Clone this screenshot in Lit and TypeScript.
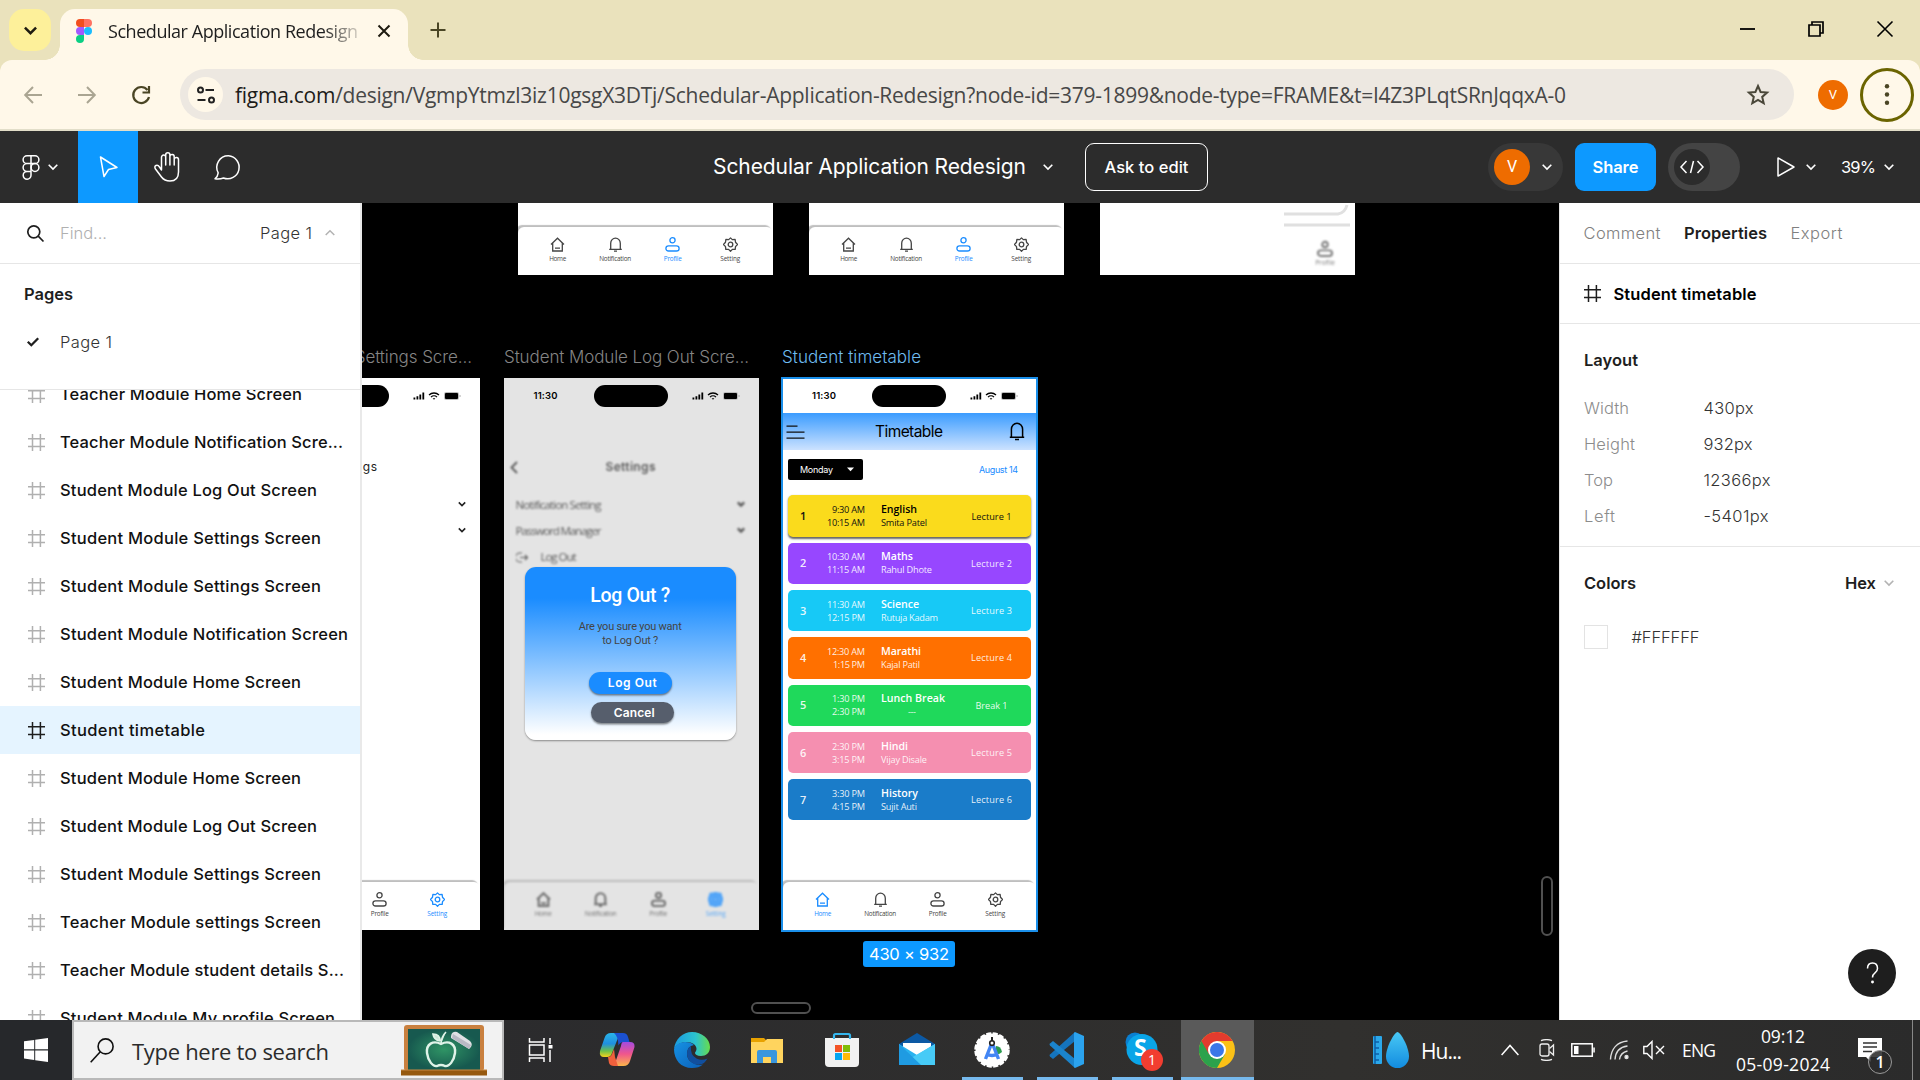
import { LitElement, html, css, svg } from "lit";
import { customElement, property } from "lit/decorators.js";
import { classMap } from "lit/directives/class-map.js";

/** A run of text tracked so that it occupies exactly `w` pixels. */
@customElement("fit-text")
class FitText extends LitElement {
  @property({ type: Number }) w = 0;
  static styles = css`
    :host { display: inline-block; white-space: pre; flex: none; width: max-content; }
  `;
  firstUpdated() {
    const n = (this.textContent ?? "").length;
    const natural = this.getBoundingClientRect().width;
    if (this.w && n > 1) {
      this.style.letterSpacing = `${(this.w - natural) / (n - 1)}px`;
      this.style.width = `${this.w}px`;
    }
  }
  render() { return html`<slot></slot>`; }
}

const chevron = (w = 10, c = "currentColor", s = 1.6) => html`<svg width=${w} height=${w} viewBox="0 0 10 10" fill="none" stroke=${c} stroke-width=${s}><path d="M.7 2.8 5 7.1 9.3 2.8"/></svg>`;
const hash = (c: string) => html`<svg width="17" height="17" viewBox="0 0 17 17" fill="none" stroke=${c} stroke-width="1.5"><path d="M4.5 0v17M12.4 0v17M0 4.7h17M0 12.6h17"/></svg>`;

const homeIcon = svg`<path d="M1 7.5 7.5 1.2 14 7.5M2.7 6.3V14h9.6V6.3M5 11.2h5"/>`;
const bellIcon = svg`<path d="M2.7 12.2V6.2a4.8 5 0 0 1 9.6 0v6M1.2 12.3h12.6M6 14.2h3"/>`;
const userIcon = svg`<circle cx="7.5" cy="3.3" r="2.6"/><rect x=".9" y="8.8" width="13.2" height="5.2" rx="2.6"/>`;
const gearIcon = svg`<path d="M7.5 .9 9.3 2.6 12.1 2.4 12.5 5.2 14.5 7.5 12.5 9.6 12.2 12.4 9.4 12.4 7.5 14.2 5.6 12.4 2.8 12.4 2.5 9.6 .5 7.5 2.5 5.2 2.9 2.4 5.7 2.6Z" stroke-linejoin="round"/><circle cx="7.5" cy="7.5" r="2.3"/>`;

@customElement("phone-status")
class PhoneStatus extends LitElement {
  static styles = css`
    :host { display: flex; align-items: center; height: 35px; flex: none; color: #000; }
    .time { font: 600 9.5px/12px Inter, sans-serif; margin-left: 30px; }
    .island { width: 74px; height: 22px; border-radius: 11px; background: #000; margin-left: 36px; }
    .signs { margin-left: 24px; }
    svg { display: block; }
  `;
  render() {
    return html`<fit-text class="time" w="24">11:30</fit-text>
      <div class="island"></div>
      <svg class="signs" width="50" height="10" viewBox="0 0 50 10">
        <path d="M.5 6.4h1.8V8.6H.5zM3.5 5.2h1.8v3.4H3.5zM6.4 3.6h1.8v5H6.4zM9.4 1.6h1.8v7H9.4z"/>
        <g fill="none" stroke="#000" stroke-width="1.3"><path d="M16 4a7.2 7.2 0 0 1 10 0M18 6.1a4.3 4.3 0 0 1 6 0"/></g>
        <path d="M19.6 7.3h2.8L21 8.8z"/>
        <rect x="31" y="1" width="15" height="8" rx="2.2" fill="#bbb"/><rect x="32" y="2" width="13" height="6" rx="1"/><path d="M46.6 3.8v2.4q1-.5 1-1.2t-1-1.2" fill="#999"/>
      </svg>`;
  }
}

@customElement("phone-nav")
class PhoneNav extends LitElement {
  @property({ type: Number }) active = 0;
  @property({ type: Number }) stroke = 1.3;
  static styles = css`
    :host { display: block; height: 48px; flex: none; margin-top: auto; background: #fff; border-radius: 6px 6px 0 0; box-shadow: -2px -2px 1px #00000040; }
    .items { display: grid; grid-template-columns: repeat(4, 57.5px); margin-left: 11px; padding-top: 10px; }
    .item { display: flex; flex-direction: column; align-items: center; color: #444; font: 6.4px/8px "Open Sans", sans-serif; gap: 3px; }
    .on { color: #1a8cff; }
    svg { display: block; }
  `;
  render() {
    const items = [["Home", homeIcon], ["Notification", bellIcon], ["Profile", userIcon], ["Setting", gearIcon]] as const;
    const widths = [17, 32, 18, 20];
    return html`<div class="items">${items.map(([t, i], k) => html`
      <div class=${classMap({ item: true, on: this.active === k })}>
        <svg width="15" height="15" viewBox="0 0 15 15" fill="none" stroke="currentColor" stroke-width=${this.stroke > 2 && this.active === k ? 3.6 : this.stroke}>${i}</svg>
        <fit-text w=${widths[k]}>${t}</fit-text>
      </div>`)}</div>`;
  }
}

const LESSONS = [
  { c: "#fadb1c", a: "9:30 AM", b: "10:15 AM", aw: 33, bw: 38, n: "English", nw: 36, t: "Smita Patel", tw: 46, l: "Lecture 1", lw: 40 },
  { c: "#9747ff", a: "10:30 AM", b: "11:15 AM", aw: 38, bw: 38, n: "Maths", nw: 32, t: "Rahul Dhote", tw: 51, l: "Lecture 2", lw: 41 },
  { c: "#17c9f6", a: "11:30 AM", b: "12:15 PM", aw: 38, bw: 38, n: "Science", nw: 38, t: "Rutuja Kadam", tw: 57, l: "Lecture 3", lw: 41 },
  { c: "#ff7000", a: "12:30 AM", b: "1:15 PM", aw: 38, bw: 32, n: "Marathi", nw: 40, t: "Kajal Patil", tw: 39, l: "Lecture 4", lw: 41 },
  { c: "#1fd95b", a: "1:30 PM", b: "2:30 PM", aw: 33, bw: 33, n: "Lunch Break", nw: 64, t: "---", tw: 8, l: "Break 1", lw: 32 },
  { c: "#f58fb0", a: "2:30 PM", b: "3:15 PM", aw: 33, bw: 33, n: "Hindi", nw: 27, t: "Vijay Disale", tw: 46, l: "Lecture 5", lw: 41 },
  { c: "#1a7cc9", a: "3:30 PM", b: "4:15 PM", aw: 33, bw: 33, n: "History", nw: 37, t: "Sujit Auti", tw: 36, l: "Lecture 6", lw: 41 },
];

@customElement("timetable-screen")
class TimetableScreen extends LitElement {
  static styles = css`
    :host { display: flex; flex-direction: column; width: 253px; height: 551px; background: #fff; color: #000; font-family: "Open Sans", sans-serif; overflow: hidden; }
    svg { display: block; }
    phone-status { height: 34px; margin-left: -1px; }
    .head { height: 37px; display: flex; align-items: center; background: linear-gradient(#3b9cff, #cce2ff); flex: none; padding: 0 11px 0 3px; }
    .title { font: 400 15.5px/20px Inter, sans-serif; margin: 0 auto 0 70px; }
    .bar { display: flex; justify-content: space-between; align-items: center; padding: 9px 18px 0 5px; flex: none; }
    .day { width: 75px; height: 21px; box-sizing: border-box; background: #000; color: #fff; border-radius: 2px; display: flex; align-items: center; justify-content: space-between; padding: 0 9px 0 12px; font: 9px/12px Inter, sans-serif; }
    .date { font: 9px/12px Inter, sans-serif; color: #1a8cff; }
    .list { display: flex; flex-direction: column; gap: 6px; padding: 15.4px 5px 0; flex: none; }
    .card { height: 41.3px; border-radius: 5px; display: flex; align-items: center; color: #ffffffe6; font-size: 9.2px; line-height: 13px; }
    .card:first-child { color: #111; box-shadow: 0 1.5px 2px #0009; }
    .num { width: 6px; margin-left: 12px; font: 600 11px/12px "Open Sans"; text-align: center; }
    .times { width: 59px; display: flex; flex-direction: column; align-items: flex-end; }
    .who { width: 90px; margin-left: 16px; display: flex; flex-direction: column; align-items: flex-start; }
    .name { font-weight: 600; font-size: 10.6px; color: #fff; }
    .card:first-child .name { color: #000; }
    .pause { margin-left: 27px; }
    .lec { width: 41px; display: flex; justify-content: center; }
  `;
  render() {
    return html`<phone-status></phone-status>
      <div class="head">
        <svg width="19" height="16" viewBox="0 0 19 16" stroke="#111" stroke-width="1.2"><path d="M.5 2.2h11M.5 8.2h18M.5 14.2h18"/></svg>
        <fit-text class="title" w="68">Timetable</fit-text>
        <svg width="16" height="19" viewBox="0 0 16 19" fill="none" stroke="#000" stroke-width="1.5"><path d="M2.4 15.2V7.3a5.6 6 0 0 1 11.2 0v7.9M.8 15.2h14.4M6 17.6h4"/></svg>
      </div>
      <div class="bar">
        <div class="day"><fit-text w="33">Monday</fit-text><svg width="7" height="5" viewBox="0 0 7 5"><path d="M0 .5h7L3.5 4.3z" fill="#fff"/></svg></div>
        <fit-text class="date" w="39">August 14</fit-text>
      </div>
      <div class="list">${LESSONS.map((x, i) => html`
        <div class="card" style="background:${x.c}">
          <div class="num">${i + 1}</div>
          <div class="times"><fit-text w=${x.aw}>${x.a}</fit-text><fit-text w=${x.bw}>${x.b}</fit-text></div>
          <div class="who"><fit-text class="name" w=${x.nw}>${x.n}</fit-text><fit-text class=${x.t === "---" ? "pause" : ""} w=${x.tw}>${x.t}</fit-text></div>
          <div class="lec"><fit-text w=${x.lw}>${x.l}</fit-text></div>
        </div>`)}</div>
      <phone-nav active="0"></phone-nav>`;
  }
}

@customElement("settings-screen")
class SettingsScreen extends LitElement {
  @property({ type: Boolean, reflect: true }) dialog = false;
  static styles = css`
    :host { display: flex; flex-direction: column; width: 255px; height: 552px; background: #fff; overflow: hidden; color: #222; font: 11.5px/14px "Open Sans", sans-serif; position: relative; }
    :host([dialog]) { background: #e4e4e4; }
    svg { display: block; }
    .body { flex: 1; display: flex; flex-direction: column; }
    :host([dialog]) .body { filter: blur(0.9px) opacity(.72); }
    .title { display: flex; align-items: center; padding: 46px 0 0 6px; gap: 88px; font: 400 12px/16px Inter, sans-serif; }
    :host([dialog]) .title { font-weight: 600; }
    .rows { display: flex; flex-direction: column; gap: 12px; padding: 23px 14px 0 12px; }
    .row { display: flex; justify-content: space-between; align-items: center; }
    .row svg { margin-bottom: 2px; }
    .out { display: flex; gap: 13px; align-items: center; }
    phone-nav { margin-top: auto; }
    :host([dialog]) phone-nav { background: #e4e4e4; }
    .box { position: absolute; left: 21.5px; top: 189px; width: 210.5px; height: 173px; border-radius: 11px; background: linear-gradient(#1a8cff 18%, #fff 97%); box-shadow: 0 1px 2px #0006; display: flex; flex-direction: column; align-items: center; }
    .q { font: 500 19.5px/24px Roboto, sans-serif; color: #fff; margin-top: 17px; }
    .msg { font: 400 11px/13.5px Roboto, sans-serif; color: #444; margin-top: 12px; display: flex; flex-direction: column; align-items: center; }
    .btn { width: 83px; height: 21.5px; border-radius: 11px; background: #1a8cff; color: #fff; font: 600 12px/22px Inter, sans-serif; display: flex; justify-content: center; box-shadow: 0 1.5px 2px #0007; }
    .ok { margin: 25px 0 0 1px; } .ok fit-text { margin-left: 3px; }
    .no { margin: 8px 0 0 5px; background: #565e6c; } .no fit-text { margin-left: 3px; }
  `;
  render() {
    const arrow = html`<svg width="8" height="8" viewBox="0 0 10 10" fill="none" stroke="#222" stroke-width=${this.dialog ? 3 : 2}><path d="M1 3l4 4 4-4"/></svg>`;
    return html`<phone-status></phone-status>
      <div class="body">
        <div class="title"><svg width="8" height="13" viewBox="0 0 8 13" fill="none" stroke="#222" stroke-width="1.8"><path d="M7 1 1.5 6.5 7 12"/></svg><fit-text w="50">Settings</fit-text></div>
        <div class="rows">
          <div class="row"><fit-text w="86">Notification Setting</fit-text>${arrow}</div>
          <div class="row"><fit-text w="86">Password Manager</fit-text>${arrow}</div>
          ${this.dialog ? html`<div class="out"><svg width="12" height="11" viewBox="0 0 12 11" fill="none" stroke="#222" stroke-width="1.2"><path d="M6 1H4a4.5 4.5 0 0 0 0 9h2M4 5.5h7M9 3l2.5 2.5L9 8"/></svg><fit-text w="36">Log Out</fit-text></div>` : ""}
        </div>
        <phone-nav active="3" stroke=${this.dialog ? 2.1 : 1.3}></phone-nav>
      </div>
      ${this.dialog ? html`<div class="box">
        <fit-text class="q" w="80">Log Out ?</fit-text>
        <div class="msg"><fit-text w="103">Are you sure you want</fit-text><fit-text w="56">to Log Out ?</fit-text></div>
        <div class="btn ok"><fit-text w="49">Log Out</fit-text></div>
        <div class="btn no"><fit-text w="41">Cancel</fit-text></div>
      </div>` : ""}`;
  }
}

const LAYERS: [string, number][] = [
  ["Teacher Module Home Screen", 242], ["Teacher Module Notification Scre...", 283], ["Student Module Log Out Screen", 257],
  ["Student Module Settings Screen", 261], ["Student Module Settings Screen", 261], ["Student Module Notification Screen", 288],
  ["Student Module Home Screen", 241], ["Student timetable", 145], ["Student Module Home Screen", 241],
  ["Student Module Log Out Screen", 257], ["Student Module Settings Screen", 261], ["Teacher Module settings Screen", 261],
  ["Teacher Module student details S...", 284], ["Student Module My profile Screen", 275],
];

const taskIcons = {
  view: svg`<g fill="none" stroke="#fff" stroke-width="1.5"><path d="M5.5 6v4h14.500V6M5.5 30v-4h14.500v4"/><rect x="5.500" y="13" width="14.500" height="10"/><path d="M26 6v6M26 18v12"/></g><path d="M24.500 13h4v3.500h-4z" fill="#fff"/>`,
  copilot: svg`<defs><linearGradient id="ca" x2="0" y2="1"><stop stop-color="#2ab5e8"/><stop offset=".45" stop-color="#1f8fe0"/><stop offset=".75" stop-color="#6cc04a"/><stop offset="1" stop-color="#f5d21c"/></linearGradient><linearGradient id="cb" x2="0" y2="1"><stop stop-color="#a44be0"/><stop offset=".5" stop-color="#f0568c"/><stop offset="1" stop-color="#fbb54a"/></linearGradient></defs>
    <path d="M12 1h9L13 21q-1 4-5 4H5q-5 0-4-6L5.500 6Q7 1 12 1Z" fill="url(#ca)"/><path d="M15 1h9q4 0 5 4l1.500 5h-6q-3.500 0-5 3.500Q19 4 15 1Z" fill="#1b50d0"/>
    <path d="M24 10h7q5 0 4.500 5L31 29q-1.500 5-6.500 5H15L22 14q.5-4 2-4Z" fill="url(#cb)"/><path d="M9 25q3 0 4-3l2-5 1 8 3 9h-4q-4 0-5-3z" fill="#f0603c"/>`,
  edge: svg`<defs><linearGradient id="ea" x2="1"><stop stop-color="#1a9ae0"/><stop offset=".6" stop-color="#2cc3cf"/><stop offset="1" stop-color="#67dc4c"/></linearGradient><linearGradient id="eb" x2="1" y2="1"><stop stop-color="#1692e4"/><stop offset="1" stop-color="#0b5fb8"/></linearGradient></defs>
    <path d="M0 17C1 7 9 0 18 0c10 0 18 7 18 15 0 6-4 9-9 9-4 0-6-1.500-6-3 0-1 1.500-2 1.500-4 0-4-4-7-10-7Q4 10 0 17Z" fill="url(#ea)"/>
    <path d="M0 17Q3 10 11 10q6 0 9 3-7 1-7 9 0 7 8 10 4 1.500 8 .5-4 3.500-11 3.500C7 36 0 28 0 17Z" fill="url(#eb)"/><path d="M17 14q-4 2-4 8 0 6 7 10 6 2 10-1 2-2 3.500-4.500-6 2.500-11 0Q16 23 17 14Z" fill="#114f9e"/>`,
  folder: svg`<path d="M2 6h13l3 3h16v22H2z" fill="#e8a200"/><path d="M2 10h13l3-3h16v24H2z" fill="#ffd45e"/><path d="M8 31V20q0-2 2-2h16q2 0 2 2v11h-6v-6h-8v6z" fill="#3a96dd"/>`,
  store: svg`<path d="M10 8V3.500Q10 2 11.500 2h13Q26 2 26 3.500V8" fill="none" stroke="#35b6ee" stroke-width="2.200"/><path d="M1 6h34v25q0 4-4 4H5q-4 0-4-4z" fill="#f1f1f1"/><path d="M9 7V3h2v4zM25 7V3h2v4z" fill="#35b6ee"/><path d="M11 13h7v7h-7z" fill="#f35325"/><path d="M19 13h7v7h-7z" fill="#81bc06"/><path d="M11 21h7v7h-7z" fill="#05a6f0"/><path d="M19 21h7v7h-7z" fill="#ffba08"/>`,
  mail: svg`<path d="M0 12 18 1l18 11v10H0z" fill="#0c59a4"/><path d="M4 11h28v12H4z" fill="#fff"/><path d="M0 12 18 23 36 12v21H0z" fill="#29b2ef"/><path d="M0 33 36 12v21z" fill="#47cbf7"/><path d="M0 12 22 33H0z" fill="#1f9be2"/>`,
  studio: svg`<circle cx="18" cy="18" r="16.500" fill="#fff" stroke="#fff" stroke-width="2.500" stroke-dasharray="5 1.500"/><path d="M22 14q5 0 6 6-3 3-7 2z" fill="#2b9b4f"/><path d="M17 13 11.500 27M19 13l5.500 14M12.500 22q5.500 3 11 0" fill="none" stroke="#4285f4" stroke-width="3.400"/><circle cx="18" cy="11" r="2.300" fill="#fff" stroke="#222" stroke-width="1.600"/><path d="M18 5v4" stroke="#222" stroke-width="2"/>`,
  code: svg`<path d="M26 0v9L4 27 1 24.500q-1-1 0-2z" fill="#1574bd"/><path d="M26 36v-9L4 9 1 11.500q-1 1 0 2z" fill="#1b84cc"/><path d="M26 0l-1 1v34l1 1 9-4V4z" fill="#2ba3ee"/>`,
  skype: svg`<circle cx="11" cy="10" r="9.500" fill="#0a7fd0"/><circle cx="25" cy="26" r="9" fill="#0a7fd0"/><circle cx="18" cy="17.500" r="15.500" fill="#0aa5e8"/>`,
  chrome: svg`<circle cx="18" cy="18" r="18" fill="#fbc116"/><path d="M2.400 9A18 18 0 0 0 18 36l7.800-13.500L18 18z" fill="#2ba24c"/><path d="M2.400 9 10.200 22.500 18 9H33.600A18 18 0 0 0 2.400 9z" fill="#e33b2e"/><circle cx="18" cy="18" r="9" fill="#fff"/><circle cx="18" cy="18" r="7" fill="#3a77e8"/>`,
};

@customElement("task-bar")
class TaskBar extends LitElement {
  static styles = css`
    :host { display: flex; height: 60px; background: linear-gradient(90deg, #2b2b2d 25%, #31302e 70%, #2b2b2b); color: #fff; font-family: "Open Sans", sans-serif; align-items: stretch; }
    svg { display: block; flex: none; }
    .start { width: 72px; display: grid; place-items: center; background: #26282b; }
    .search { width: 432px; box-sizing: border-box; background: #f2f2f2; border: 2px solid #b9b9b9; display: flex; align-items: center; padding: 0 15px 0 16px; color: #2b2b2b; font-size: 22px; }
    .search fit-text { margin-left: 18px; padding-top: 2px; }
    .board { margin-left: auto; }
    .app { width: 75px; display: grid; place-items: center; position: relative; box-sizing: border-box; }
    .run::after { content: ""; position: absolute; left: 8px; right: 6px; bottom: 0; height: 3px; background: #76b9ed; }
    .cur { background: #5a5a5a; width: 73px; margin-left: 2px; padding-right: 2px; }
    .cur::after { left: 0; right: 0; }
    .s { position: absolute; font: 700 23px/28px "Open Sans"; top: 13px; left: 30px; }
    .badge { position: absolute; left: 37px; top: 29px; width: 22px; height: 22px; border-radius: 50%; background: #f23d30; font: 14px/22px "Open Sans"; text-align: center; }
    .tray { display: flex; align-items: center; margin-left: 117px; }
    .weather { font-size: 21px; margin-left: 11px; padding-top: 2px; }
    .up { margin-left: 39px; } .cam { margin-left: 19px; } .bat { margin-left: 15px; } .wifi { margin-left: 14px; } .vol { margin-left: 12px; }
    .lang { margin-left: 17px; font-size: 17.500px; }
    .clock { margin-left: 20px; width: 94px; display: flex; flex-direction: column; align-items: center; font-size: 17.500px; line-height: 28px; }
    .note { margin-left: 28px; position: relative; width: 36px; height: 40px; }
    .count { position: absolute; left: 10px; top: 20px; width: 22px; height: 22px; border: 1.500px solid #999; border-radius: 50%; background: #2b2b2be0; font: 600 16px/22px "Open Sans"; text-align: center; }
    .desk { width: 1px; background: #888; align-self: stretch; margin-left: 18px; }
  `;
  render() {
    const apps = Object.entries(taskIcons);
    return html`
      <div class="start"><svg width="24" height="24" viewBox="0 0 24 24" fill="#fff"><path d="M0 3.300 10.200 1.900v9.400H0zM11.200 1.700 24 0v11.300H11.200zM0 12.400h10.200v9.500L0 20.500zM11.200 12.400H24V24l-12.800-1.800z"/></svg></div>
      <div class="search">
        <svg width="24" height="25" viewBox="0 0 24 25" fill="none" stroke="#111" stroke-width="1.600"><circle cx="15.600" cy="8.400" r="7.500"/><path d="M10.300 13.700.7 24.200"/></svg>
        <fit-text w="197">Type here to search</fit-text>
        <svg class="board" width="86" height="51" viewBox="0 0 86 51"><defs><radialGradient id="bg"><stop stop-color="#2f9465"/><stop offset="1" stop-color="#17594f"/></radialGradient></defs>
          <rect x="3" y="0" width="80" height="46" rx="3" fill="#c9803f"/><rect x="7" y="4" width="72" height="41" fill="url(#bg)"/><rect x="0" y="45" width="86" height="5.500" fill="#96590f"/><path d="M0 45h86" stroke="#c98a45"/>
          <path d="M40 19c-8-4-15 0-14 9 1 8 6 14 10 13q4-2 8 0c4 1 9-5 10-13 1-9-6-13-14-9z" fill="none" stroke="#dff3e8" stroke-width="2.400"/><path d="M40 19Q40 12 45 7M39 16q-6-1-7-7 7 0 7 7" fill="#cfe8da" stroke="#dff3e8" stroke-width="1.700"/>
          <path d="M50 11q1-5 6-4l13 9q4 4-1 8L50 13z" fill="#e0e0e4"/><path d="M51 13l17 11 2-4-18-11z" fill="#b9b9c4"/></svg>
      </div>
      ${apps.map(([k, i]) => html`<div class=${classMap({ app: true, run: ["studio", "code", "skype", "chrome"].includes(k), cur: k === "chrome" })}>
        <svg width="36" height="36" viewBox="0 0 36 36">${i}</svg>
        ${k === "skype" ? html`<span class="s">S</span><span class="badge">1</span>` : ""}</div>`)}
      <div class="tray">
        <svg width="39" height="36" viewBox="0 0 39 36"><defs><linearGradient id="dr" x2="0" y2="1"><stop stop-color="#48c8f4"/><stop offset="1" stop-color="#128ce0"/></linearGradient></defs><rect x="2" y="4" width="9" height="28" rx="1" fill="#2ba8ea"/><path d="M4 4v28M4 10h4M4 16h4M4 22h4M4 28h4" stroke="#0d5fa8" stroke-width="1.500"/><path d="M26.500 0c3 0 11.500 15 11.500 24.500a11.500 11.500 0 0 1-23 0C15 15 23.500 0 26.500 0z" fill="url(#dr)"/></svg>
        <fit-text class="weather" w="41">Hu...</fit-text>
        <svg class="up" width="18" height="12" viewBox="0 0 18 12" fill="none" stroke="#fff" stroke-width="1.500"><path d="M.6 11 9 1.500l8.400 9.500"/></svg>
        <svg class="cam" width="18" height="22" viewBox="0 0 18 22" fill="none" stroke="#eee" stroke-width="1.300"><rect x="2" y="5" width="9" height="12" rx="2"/><path d="M11.500 9.500 15.500 6v10l-4-3.500M3 1.600Q8.500-.4 14 1.600M3 20.400q5.500 2 11 0"/></svg>
        <svg class="bat" width="24" height="14" viewBox="0 0 24 14"><rect x=".8" y=".8" width="20.500" height="12.400" fill="none" stroke="#fff" stroke-width="1.500"/><path d="M3 3h4.500v8H3zM22.300 4.500h1.500v5h-1.500z" fill="#fff"/></svg>
        <svg class="wifi" width="22" height="20" viewBox="0 0 22 20" fill="none" stroke="#ddd" stroke-width="1.400"><path d="M1.500 19.500C2 9 8 2 18.500 1M6 19.500C6.500 12 11 7 18.500 6M10.500 19.500q1-7 8-8.500"/><circle cx="17.500" cy="17" r="1.500" fill="#fff"/></svg>
        <svg class="vol" width="22" height="20" viewBox="0 0 22 20" fill="none" stroke="#fff" stroke-width="1.400"><path d="M.8 6.500H4L9 1.500v17L4 13.500H.8zM13 6l8 8M21 6l-8 8"/></svg>
        <fit-text class="lang" w="34">ENG</fit-text>
        <div class="clock"><fit-text w="44">09:12</fit-text><fit-text w="94">05-09-2024</fit-text></div>
        <div class="note"><svg width="36" height="40" viewBox="0 0 36 40"><path d="M0 8h24v19H13v5l-5-5H0z" fill="#fff"/><path d="M5 13h14M5 17h14M5 21.500h9" stroke="#333" stroke-width="1.300"/></svg><span class="count">1</span></div>
        <div class="desk"></div>
      </div>`;
  }
}

@customElement("app-root")
class AppRoot extends LitElement {
  static styles = css`
    :host { display: flex; flex-direction: column; width: 1920px; height: 1080px; overflow: hidden; background: #eae2bc; font-family: Inter, sans-serif; font-size: 16.5px; line-height: 24px; color: #1e1e1e; }
    * { box-sizing: border-box; }
    svg { display: block; flex: none; overflow: visible; }
    .tabs { height: 60px; display: flex; flex: none; padding: 9px 0 0 9px; font-family: "Open Sans", sans-serif; }
    .down { width: 42px; height: 42px; border-radius: 15px; background: #fdf09a; display: grid; place-items: center; }
    .tab { width: 348px; height: 51px; margin-left: 9px; background: #fff8e9; border-radius: 15px 15px 0 0; display: flex; align-items: center; position: relative; padding: 0 18px 8px 16px; font-size: 18px; }
    .tab::before, .tab::after { content: ""; position: absolute; bottom: 0; width: 15px; height: 15px; }
    .tab::before { left: -15px; background: radial-gradient(circle at 0 0, transparent 14.500px, #fff8e9 15px); }
    .tab::after { right: -15px; background: radial-gradient(circle at 100% 0, transparent 14.500px, #fff8e9 15px); }
    .cap { margin-left: 16px; width: 250px; overflow: hidden; mask-image: linear-gradient(90deg, #000 86%, #0003); }
    .cross { margin-left: auto; }
    .plus { margin: 13px 0 0 22px; }
    .win { margin: 12px 27px 0 auto; display: flex; gap: 53px; }
    .address { height: 71px; flex: none; background: #fff8e9; border-bottom: 2px solid #e2dec9; border-radius: 12px 12px 0 0; display: flex; align-items: center; padding: 0 6px 0 24px; font-family: "Open Sans", sans-serif; }
    .fwd, .reload { margin-left: 36px; }
    .url { width: 1614px; height: 51px; border-radius: 26px; background: #ede8e1; margin-left: 30px; display: flex; align-items: center; padding: 0 25px 0 8px; color: #474747; font-size: 21px; }
    .host { color: #1c1b18; }
    .site { width: 35px; height: 35px; border-radius: 50%; background: #fff8e9; display: grid; place-items: center; margin-right: 12px; }
    .url svg.star { margin-left: auto; }
    .ava { width: 30px; height: 30px; border-radius: 50%; background: #ee6c00; color: #fff; font: 13px/30px Roboto, sans-serif; text-align: center; margin-left: 24px; }
    .kebab { width: 54px; height: 54px; border-radius: 50%; border: 3px solid #6b6400; margin-left: 12px; display: grid; place-items: center; }
    .bar { height: 72px; flex: none; background: #2c2c2c; color: #fff; display: flex; align-items: center; }
    .menu { width: 78px; padding-left: 22px; display: flex; align-items: center; gap: 8px; }
    .tool { width: 60px; height: 72px; display: grid; place-items: center; }
    .tool + .tool { padding-right: 2px; }
    .on { background: #0d99ff; }
    .doc { margin-left: 455px; font-size: 21px; display: flex; align-items: center; gap: 17px; }
    .ask { width: 123px; height: 48px; border: 1.5px solid #fff; border-radius: 9px; margin-left: 32px; display: grid; place-items: center; font-weight: 500; }
    .pill { width: 75px; height: 48px; border-radius: 24px; background: #383838; display: flex; align-items: center; padding-left: 6px; gap: 12px; margin-left: 280px; }
    .face { width: 36px; height: 36px; border-radius: 50%; background: #ee6c00; font: 16px/36px Roboto, sans-serif; text-align: center; }
    .share { width: 81px; height: 48px; border-radius: 9px; background: #0d99ff; margin-left: 12px; display: grid; place-items: center; font-weight: 600; }
    .dev { width: 72px; height: 48px; border-radius: 24px; background: #444; margin-left: 12px; padding: 6px; }
    .knob { width: 36px; height: 36px; border-radius: 50%; background: #2c2c2c; display: grid; place-items: center; }
    .play { margin-left: 37px; } .play + svg { margin-left: 11px; }
    .zoom { margin: 0 8px 0 25px; }
    .main { flex: 1; display: flex; min-height: 0; }
    .left { width: 362px; background: #fff; border-right: 2px solid #e9e9e9; flex: none; display: flex; flex-direction: column; overflow: hidden; }
    .find { height: 61px; flex: none; border-bottom: 1px solid #e6e6e6; display: flex; align-items: center; padding: 0 25px 0 27px; color: #333; font-weight: 350; }
    .find .ph { color: #b0b0b0; margin-left: 16px; } .find .pg { margin-left: auto; margin-right: 13px; }
    .pages { height: 126px; flex: none; border-bottom: 1px solid #e6e6e6; padding: 18px 0 0 24px; }
    .pages .h { font-weight: 600; display: block; }
    .pages .r { display: flex; align-items: center; gap: 21px; margin: 24px 0 0 3px; color: #333; font-weight: 350; }
    .layers { flex: 1; min-height: 0; overflow: hidden; }
    .list { margin-top: -20px; }
    .layer { height: 48px; display: flex; align-items: center; padding-left: 28px; gap: 15px; color: #111; font-weight: 500; }
    .sel { background: #e5f4ff; }
    .canvas { flex: 1; background: #000; position: relative; overflow: hidden; }
    .frame { position: absolute; }
    .lbl { position: absolute; top: 142px; color: #858585; font-weight: 350; font-size: 17px; }
    .lbl.act { color: #6fbcf0; left: 420px; } .l1 { left: -136px; } .l2 { left: 142px; }
    .f1 { left: -137px; top: 175px; } .f2 { left: 141.5px; top: 175px; }
    .f3 { left: 419px; top: 174px; border: 2px solid #1a8fea; }
    .top { width: 254.5px; height: 71.5px; background: #fff; display: flex; flex-direction: column; overflow: hidden; top: 0; }
    .t1 { left: 156px; } .t2 { left: 447px; } .t3 { left: 738px; }
    .ghost { filter: blur(1.2px); margin: 38px 0 0 215px; width: 20px; color: #777; font: 6.5px/8px "Open Sans"; text-align: center; display: flex; flex-direction: column; align-items: center; gap: 2px; }
    .curl { position: absolute; left: 184px; top: 0; }
    .size { position: absolute; left: 501px; top: 738px; width: 92px; height: 26px; border-radius: 3px; background: #0d99ff; color: #fff; display: grid; place-items: center; }
    .hs, .vs { position: absolute; border: 2px solid #505050; border-radius: 6px; }
    .hs { left: 389px; top: 799px; width: 60px; height: 12px; } .vs { left: 1179px; top: 673px; width: 12px; height: 60px; }
    .right { width: 361px; flex: none; background: #fff; border-left: 1px solid #e6e6e6; position: relative; color: #333; font-weight: 350; }
    .ptabs { height: 61px; border-bottom: 1px solid #e6e6e6; display: flex; align-items: center; padding-left: 23.5px; color: #808080; gap: 23.5px; }
    .ptabs .cur, .b { font-weight: 600; color: #1e1e1e; }
    .node { height: 60px; border-bottom: 1px solid #e6e6e6; display: flex; align-items: center; padding-left: 24px; gap: 12.5px; color: #000; font-weight: 600; }
    .lay { height: 223px; border-bottom: 1px solid #e6e6e6; padding: 24px 0 0 24px; }
    .grid { display: grid; grid-template-columns: 119.5px 1fr; row-gap: 12px; margin-top: 24px; }
    .grid .k { color: #8c8c8c; }
    .cols { padding: 24px 26px 0 24px; }
    .crow { display: flex; align-items: center; }
    .hex { margin: 0 8px 0 auto; }
    .sw { width: 24px; height: 24px; border: 1px solid #e3e3e3; margin-right: 23.5px; }
    .c2 { margin-top: 30px; }
    .help { position: absolute; right: 24px; bottom: 23px; width: 48px; height: 48px; border-radius: 50%; background: #1e1e1e; color: #fff; display: grid; place-items: center; }
  `;
  render() {
    return html`
    <div class="tabs">
      <div class="down">${chevron(13, "#1e1b10", 1.9)}</div>
      <div class="tab">
        <svg width="16" height="24" viewBox="0 0 16 24"><path d="M4 0h4v8H4a4 4 0 0 1 0-8z" fill="#f24e1e"/><path d="M8 0h4a4 4 0 0 1 0 8H8z" fill="#ff7262"/><path d="M4 8h4v8H4a4 4 0 0 1 0-8z" fill="#a259ff"/><circle cx="12" cy="12" r="4" fill="#1abcfe"/><path d="M4 16h4v4a4 4 0 1 1-4-4z" fill="#0acf83"/></svg>
        <div class="cap"><fit-text w="250">Schedular Application Redesign</fit-text></div>
        <svg class="cross" width="12" height="12" viewBox="0 0 12 12" stroke="#1e1b10" stroke-width="2"><path d="M.5.5l11 11M11.500.5l-11 11"/></svg>
      </div>
      <svg class="plus" width="16" height="16" viewBox="0 0 16 16" stroke="#4a4524" stroke-width="2"><path d="M8 .5v15M.5 8h15"/></svg>
      <div class="win">
        <svg width="16" height="16" viewBox="0 0 16 16" stroke="#000" stroke-width="1.800"><path d="M1 8h15"/></svg>
        <svg width="16" height="16" viewBox="0 0 16 16" fill="none" stroke="#000" stroke-width="1.700"><path d="M1 4h11v11H1zM4 4V1h11v11h-3"/></svg>
        <svg width="16" height="16" viewBox="0 0 16 16" stroke="#000" stroke-width="1.600"><path d="M.5.5l15 15M15.500.5l-15 15"/></svg>
      </div>
    </div>
    <div class="address">
      <svg width="18" height="18" viewBox="0 0 18 18" fill="none" stroke="#aaa592" stroke-width="2"><path d="M18 9H1.500M9 1 1.200 9 9 17"/></svg>
      <svg class="fwd" width="18" height="18" viewBox="0 0 18 18" fill="none" stroke="#aaa592" stroke-width="2"><path d="M0 9h16.500M9 1l7.800 8L9 17"/></svg>
      <svg class="reload" width="18" height="18" viewBox="0 0 18 18" fill="none" stroke="#4a4524" stroke-width="2.200"><path d="M15.500 4A8 8 0 1 0 17 11M17 0v6.500h-6.500"/></svg>
      <div class="url">
        <div class="site"><svg width="18" height="18" viewBox="0 0 18 18" fill="none" stroke="#222" stroke-width="2"><circle cx="3.500" cy="4" r="2.500"/><path d="M8.500 4H17M.5 14h8"/><circle cx="14.500" cy="14" r="2.500"/></svg></div>
        <fit-text w="1331"><span class="host">figma.com</span>/design/VgmpYtmzl3iz10gsgX3DTj/Schedular-Application-Redesign?node-id=379-1899&node-type=FRAME&t=I4Z3PLqtSRnJqqxA-0</fit-text>
        <svg class="star" width="22" height="21" viewBox="0 0 22 21" fill="none" stroke="#4a4739" stroke-width="2"><path d="M11 2l2.600 6 6.500.6-4.900 4.300 1.500 6.400L11 15.900l-5.700 3.400 1.500-6.400L1.900 8.600l6.500-.6z"/></svg>
      </div>
      <div class="ava">V</div>
      <div class="kebab"><svg width="5" height="21" viewBox="0 0 5 21" fill="#4a4524"><circle cx="2" cy="2.300" r="2.200"/><circle cx="2" cy="10.500" r="2.200"/><circle cx="2" cy="18.700" r="2.200"/></svg></div>
    </div>
    <div class="bar">
      <div class="menu"><svg width="18" height="25" viewBox="0 0 18 25" fill="none" stroke="#fff" stroke-width="1.500"><path d="M9 .8H5a3.900 3.900 0 0 0 0 7.800h4zM9 .8h4a3.900 3.900 0 0 1 0 7.800H9zM9 8.600H5a3.900 3.900 0 0 0 0 7.800h4zM5 16.400h4v3.900a3.900 3.900 0 1 1-4-3.900z"/><circle cx="13" cy="12.500" r="3.900"/></svg>${chevron()}</div>
      <div class="tool on"><svg width="19" height="22" viewBox="0 0 19 22" fill="none" stroke="#fff" stroke-width="1.500" stroke-linejoin="round"><path d="M1.500 1 5 20.500 9.500 13.500l8.500-2z"/></svg></div>
      <div class="tool"><svg width="27" height="30" viewBox="0 0 27 30" fill="none" stroke="#fff" stroke-width="1.500" stroke-linecap="round" stroke-linejoin="round"><path d="M7.500 17.500V5.200a2.100 2.100 0 0 1 4.200 0V13M11.700 5V2.900a2.100 2.100 0 0 1 4.200 0V13M15.900 4.500a2.100 2.100 0 0 1 4.300.5V13M20.200 7.500a2.100 2.100 0 0 1 4.300.5v12q0 9-8.500 9-5.500 0-8.500-4l-6-8q-1.500-2.500.5-3.500 2-.8 3.500 1.500l2 3"/></svg></div>
      <div class="tool"><svg width="27" height="25" viewBox="0 0 27 25" fill="none" stroke="#fff" stroke-width="1.500" stroke-linejoin="round"><path d="M14.500.8a11.500 11.500 0 1 1-5 22.200Q6 24.400 1 23.800q2.800-2.500 3.200-6A11.500 11.500 0 0 1 14.500.8z"/></svg></div>
      <div class="doc"><fit-text w="313">Schedular Application Redesign</fit-text>${chevron()}</div>
      <div class="ask"><fit-text w="84">Ask to edit</fit-text></div>
      <div class="pill"><div class="face">V</div>${chevron()}</div>
      <div class="share"><fit-text w="46">Share</fit-text></div>
      <div class="dev"><div class="knob"><svg width="24" height="14" viewBox="0 0 24 14" fill="none" stroke="#fff" stroke-width="1.500"><path d="M6.500 1 1 7l5.500 6M17.500 1 23 7l-5.500 6M13.500 1l-3 12"/></svg></div></div>
      <svg class="play" width="18" height="20" viewBox="0 0 18 20" fill="none" stroke="#fff" stroke-width="1.500" stroke-linejoin="round"><path d="M1 1v18l16-9z"/></svg>${chevron()}
      <fit-text class="zoom" w="35">39%</fit-text>${chevron()}
    </div>
    <div class="main">
      <div class="left">
        <div class="find"><svg width="17" height="17" viewBox="0 0 17 17" fill="none" stroke="#1e1e1e" stroke-width="1.700"><circle cx="6.800" cy="6.800" r="6"/><path d="M11.200 11.200 16.500 16.500"/></svg>
          <fit-text class="ph" w="47">Find...</fit-text><fit-text class="pg" w="52">Page 1</fit-text><svg width="10" height="10" viewBox="0 0 10 10" fill="none" stroke="#b3b3b3" stroke-width="1.500"><path d="M.7 7 5 2.700 9.300 7"/></svg></div>
        <div class="pages"><fit-text class="h" w="49">Pages</fit-text>
          <div class="r"><svg width="12" height="10" viewBox="0 0 12 10" fill="none" stroke="#1e1e1e" stroke-width="2.300"><path d="M.8 4.800 4.300 8.200 11.200 1.200"/></svg><fit-text w="52">Page 1</fit-text></div></div>
        <div class="layers"><div class="list">${LAYERS.map(([t, w]) => html`<div class=${classMap({ layer: true, sel: t === "Student timetable" })}>${hash(t === "Student timetable" ? "#1e1e1e" : "#b0b0b0")}<fit-text w=${w}>${t}</fit-text></div>`)}</div></div>
      </div>
      <div class="canvas">
        <div class="frame top t1"><phone-nav active="2"></phone-nav></div>
        <div class="frame top t2"><phone-nav active="2"></phone-nav></div>
        <div class="frame top t3">
          <svg class="curl" width="66" height="24" viewBox="0 0 66 24" fill="none"><path d="M0 11h54q7-1 9-9M0 22h66" stroke="#ccc" stroke-width="3" opacity=".6"/></svg>
          <div class="ghost"><svg width="16" height="16" viewBox="0 0 15 15" fill="none" stroke="currentColor" stroke-width="1.800">${userIcon}</svg>Profile</div></div>
        <fit-text class="lbl l1" w="246">Student Module Settings Scre...</fit-text>
        <fit-text class="lbl l2" w="245">Student Module Log Out Scre...</fit-text>
        <fit-text class="lbl act" w="139">Student timetable</fit-text>
        <settings-screen class="frame f1"></settings-screen>
        <settings-screen class="frame f2" dialog></settings-screen>
        <div class="frame f3"><timetable-screen></timetable-screen></div>
        <div class="size"><fit-text w="80">430 × 932</fit-text></div>
        <div class="hs"></div><div class="vs"></div>
      </div>
      <div class="right">
        <div class="ptabs"><fit-text w="77">Comment</fit-text><fit-text class="cur" w="83">Properties</fit-text><fit-text w="52">Export</fit-text></div>
        <div class="node">${hash("#1e1e1e")}<fit-text w="143">Student timetable</fit-text></div>
        <div class="lay"><fit-text class="b" w="54">Layout</fit-text>
          <div class="grid">
            <fit-text class="k" w="45">Width</fit-text><fit-text w="50">430px</fit-text>
            <fit-text class="k" w="51">Height</fit-text><fit-text w="49">932px</fit-text>
            <fit-text class="k" w="29">Top</fit-text><fit-text w="67">12366px</fit-text>
            <fit-text class="k" w="31">Left</fit-text><fit-text w="65">-5401px</fit-text>
          </div></div>
        <div class="cols">
          <div class="crow"><fit-text class="b" w="52">Colors</fit-text><fit-text class="b hex" w="31">Hex</fit-text>${chevron(10, "#b3b3b3")}</div>
          <div class="crow c2"><div class="sw"></div><fit-text w="68">#FFFFFF</fit-text></div>
        </div>
        <div class="help"><svg width="13" height="22" viewBox="0 0 13 22" fill="none" stroke="#fff" stroke-width="1.500"><path d="M1.500 6.500Q1.500 1 6.500 1t5 5.500Q11.500 9 9 10.800T6.500 15.500"/><circle cx="6.500" cy="20" r=".7" fill="#fff"/></svg></div>
      </div>
    </div>
    <task-bar></task-bar>`;
  }
}
